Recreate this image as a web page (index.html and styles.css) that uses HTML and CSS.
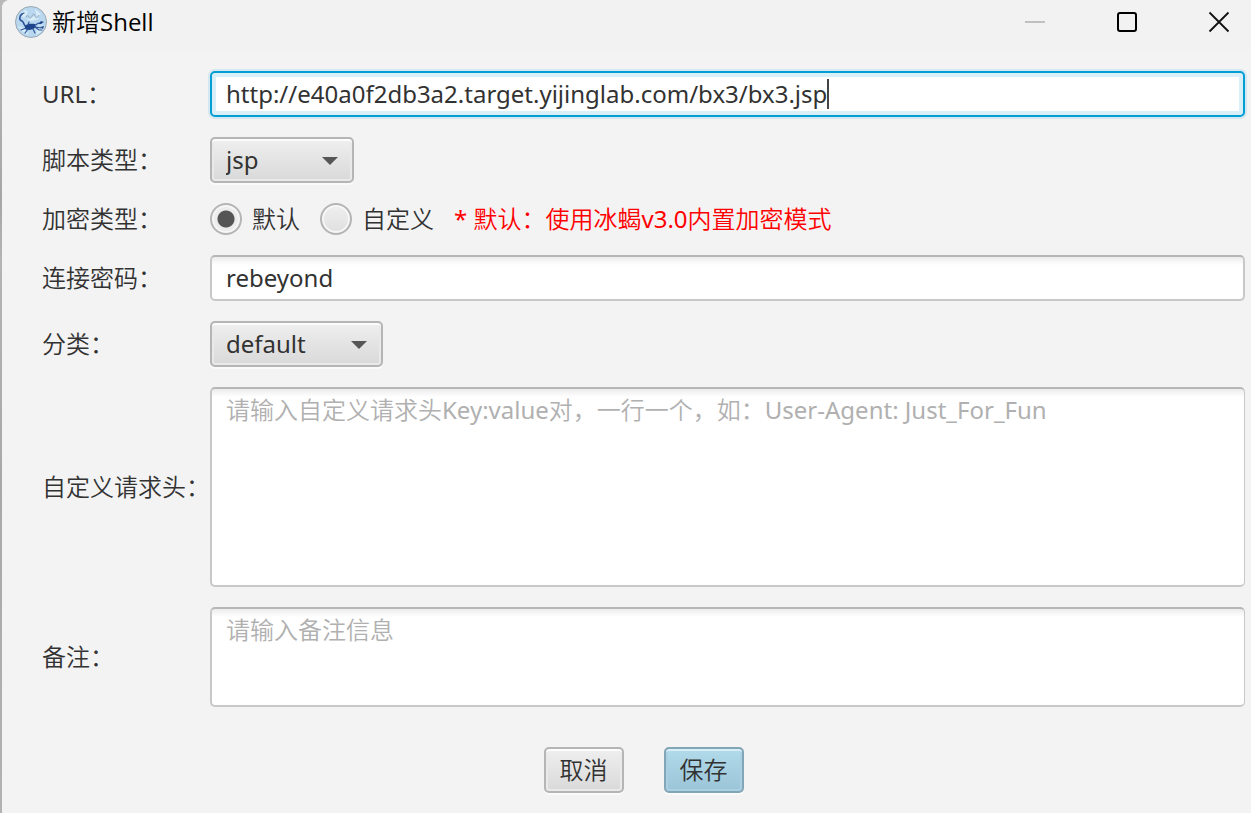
FILE: index.html
```html
<!DOCTYPE html>
<html lang="zh-CN">
<head>
<meta charset="utf-8">
<title>新增Shell</title>
<link rel="stylesheet" href="styles.css">
</head>
<body>
<main class="window">
  <header class="titlebar">
    <svg class="logo" viewBox="0 0 32 32" aria-hidden="true">
      <circle cx="16" cy="16" r="15.5" fill="#b9d8ef" stroke="#9aa8b2" stroke-width="1"/>
      <path d="M5 8l5-4 3 2-4 6zM20 3l6 5-4 3zM3 20l5 6 6 3-5-7zM22 24l6-6-1 7-6 4zM12 13l8-3 4 3-8 2z" fill="#d9edf9"/>
      <path d="M11 11q2-3 3 0t3-1 3 0 4-1" fill="none" stroke="#8fa2b3" stroke-width="0.800"/>
      <path d="M7 8c-3 2-3 6 0 7 3 2 1 5 5 6" fill="none" stroke="#2c5296" stroke-width="1.600" stroke-linecap="round"/>
      <path d="M10 20c3-3 7-2 10-2l1 3c-3 3-8 4-11 2z" fill="#1d438d"/>
      <path d="M20 19c2 0 2-2 4-2m-4 4c3 1 4 0 6 1M11 22l-5 2m7-1l-3 4m8-4l2 4m0-6l4 3 3 0M13 19l1-3M7 8l2-1" fill="none" stroke="#2f5598" stroke-width="1.200" stroke-linecap="round"/>
      <path d="M23 18l3-3 3 1-3 2zM25 21l4-1-1 3z" fill="#24488c"/>
    </svg>
    <h1 class="title">新增Shell</h1>
    <div class="controls">
      <button class="control" type="button" aria-label="最小化" disabled>
        <svg viewBox="0 0 22 22"><path d="M1 11h20" stroke="#c0c0c0" stroke-width="2"/></svg>
      </button>
      <button class="control" type="button" aria-label="最大化">
        <svg viewBox="0 0 22 22"><rect x="2" y="2" width="18" height="18" rx="2" fill="none" stroke="#000" stroke-width="2"/></svg>
      </button>
      <button class="control" type="button" aria-label="关闭">
        <svg viewBox="0 0 22 22"><path d="M1.500 1.500l19 19M20.500 1.500l-19 19" stroke="#111" stroke-width="1.800"/></svg>
      </button>
    </div>
  </header>

  <form class="form">
    <label class="label" for="url">URL：</label>
    <div class="url-box">
      <input class="field focused" id="url" type="text" value="http://e40a0f2db3a2.target.yijinglab.com/bx3/bx3.jsp">
      <span class="caret"></span>
    </div>

    <label class="label" for="script">脚本类型：</label>
    <div class="picker picker-script">
      <select class="select" id="script"><option>jsp</option></select>
    </div>

    <span class="label" id="crypto">加密类型：</span>
    <div class="options" role="radiogroup" aria-labelledby="crypto">
      <label class="option"><input class="radio" type="radio" name="crypto" checked>默认</label>
      <label class="option"><input class="radio" type="radio" name="crypto">自定义</label>
      <span class="hint">* 默认：使用冰蝎v3.0内置加密模式</span>
    </div>

    <label class="label" for="password">连接密码：</label>
    <input class="field" id="password" type="text" value="rebeyond">

    <label class="label" for="category">分类：</label>
    <div class="picker picker-category">
      <select class="select" id="category"><option>default</option></select>
    </div>

    <label class="label" for="headers">自定义请求头：</label>
    <textarea class="field area area-headers" id="headers" placeholder="请输入自定义请求头Key:value对，一行一个，如：User-Agent: Just_For_Fun"></textarea>

    <label class="label" for="remark">备注：</label>
    <textarea class="field area area-remark" id="remark" placeholder="请输入备注信息"></textarea>

    <div class="actions">
      <button class="button" type="button">取消</button>
      <button class="button primary" type="submit">保存</button>
    </div>
  </form>
</main>
</body>
</html>
```

FILE: styles.css
```css
* {
  box-sizing: border-box;
}

body {
  margin: 0;
  padding-left: 2px;
  min-height: 100vh;
  background: linear-gradient(#b9b9b9, #a6a6a6 200px, #b4b4b4 260px, #a8a8a8 480px, #b2b2b2);
  color: #323232;
  font: 24px/32px "Noto Sans", "Noto Sans CJK SC DemiLight", "Noto Sans CJK SC", sans-serif;
}

input,
select,
textarea,
button {
  font: inherit;
  color: inherit;
}

.window {
  min-height: 100vh;
  background: #f3f3f3;
  border-radius: 8px 0 0 0;
}

.titlebar {
  display: flex;
  align-items: flex-start;
  height: 51px;
  padding: 6px 0 0 13px;
  background: #f2f2f2;
  border-radius: 8px 0 0 0;
}

.logo {
  width: 32px;
  height: 32px;
  margin-right: 5px;
}

.title {
  margin: 0;
  font-size: 24px;
  font-weight: 400;
  font-family: "Open Sans", "Noto Sans CJK SC DemiLight", "Noto Sans CJK SC", sans-serif;
  color: #000;
}

.controls {
  display: flex;
  gap: 28px;
  margin-left: auto;
}

.control {
  display: grid;
  place-items: center;
  width: 64px;
  height: 32px;
  padding: 0;
  border: 0;
  background: none;
}

.control svg {
  width: 22px;
  height: 22px;
}

.form {
  display: grid;
  grid-template-columns: 148px 1fr;
  align-items: center;
  gap: 20px;
  padding: 20px 6px 20px 40px;
}

.label {
  white-space: nowrap;
}

.field {
  display: block;
  width: 100%;
  height: 46px;
  padding: 4px 14px 6px;
  border: 2px solid #c8c8c8;
  border-top-color: #b6b6b6;
  border-radius: 5px;
  outline: 0;
  background: linear-gradient(#ececec, #fff 8px);
}

.url-box {
  position: relative;
}

.focused {
  border-color: #039ed3;
  background: #fff;
  box-shadow: 0 0 0 2px #d3e8f0, inset 0 0 0 4px #d9f0f8;
  caret-color: transparent;
}

.caret {
  position: absolute;
  left: 617px;
  top: 8px;
  width: 2px;
  height: 30px;
  background: #444;
}

.picker {
  position: relative;
}

.picker-script {
  width: 144px;
}

.picker-category {
  width: 173px;
}

.picker::after {
  content: "";
  position: absolute;
  right: 16px;
  top: 20px;
  border: 8px solid transparent;
  border-top-color: #565656;
  border-bottom: 0;
  pointer-events: none;
}

.select,
.button {
  appearance: none;
  display: block;
  height: 46px;
  border: 2px solid #b5b5b5;
  border-radius: 5px;
  background: linear-gradient(#efefef, #d9d9d9);
  box-shadow: inset 0 2px #fcfcfc, inset 0 0 0 2px #e9e9e9, 0 2px #fafafa;
}

.select {
  width: 100%;
  padding: 0 14px;
}

.options {
  display: flex;
  align-items: center;
  height: 32px;
  gap: 20px;
}

.option {
  display: flex;
  align-items: center;
  gap: 10px;
}

.radio {
  appearance: none;
  width: 32px;
  height: 32px;
  margin: 0;
  border: 2px solid #b5b5b5;
  border-radius: 50%;
  background: linear-gradient(#efefef, #dfdfdf);
  box-shadow: inset 0 0 0 2px #f6f6f6;
}

.radio:checked {
  background: radial-gradient(circle, #555 8px, #ececec 9px);
}

.hint {
  color: #f00;
}

.area {
  padding: 5px 14px;
  border-right-width: 1px;
  resize: none;
}

.area::placeholder {
  color: #b0b0b0;
}

.area-headers {
  height: 200px;
}

.area-remark {
  height: 100px;
}

.actions {
  grid-column: 1 / -1;
  display: flex;
  justify-content: center;
  gap: 40px;
  padding-top: 20px;
}

.button {
  width: 80px;
  padding: 0;
}

.primary {
  border-color: #82a6b8;
  background: linear-gradient(#b1daea, #9bc4d8);
  box-shadow: inset 0 2px #d8edf5, inset 0 0 0 2px #a9d0e1, 0 2px #fafafa;
}
```
